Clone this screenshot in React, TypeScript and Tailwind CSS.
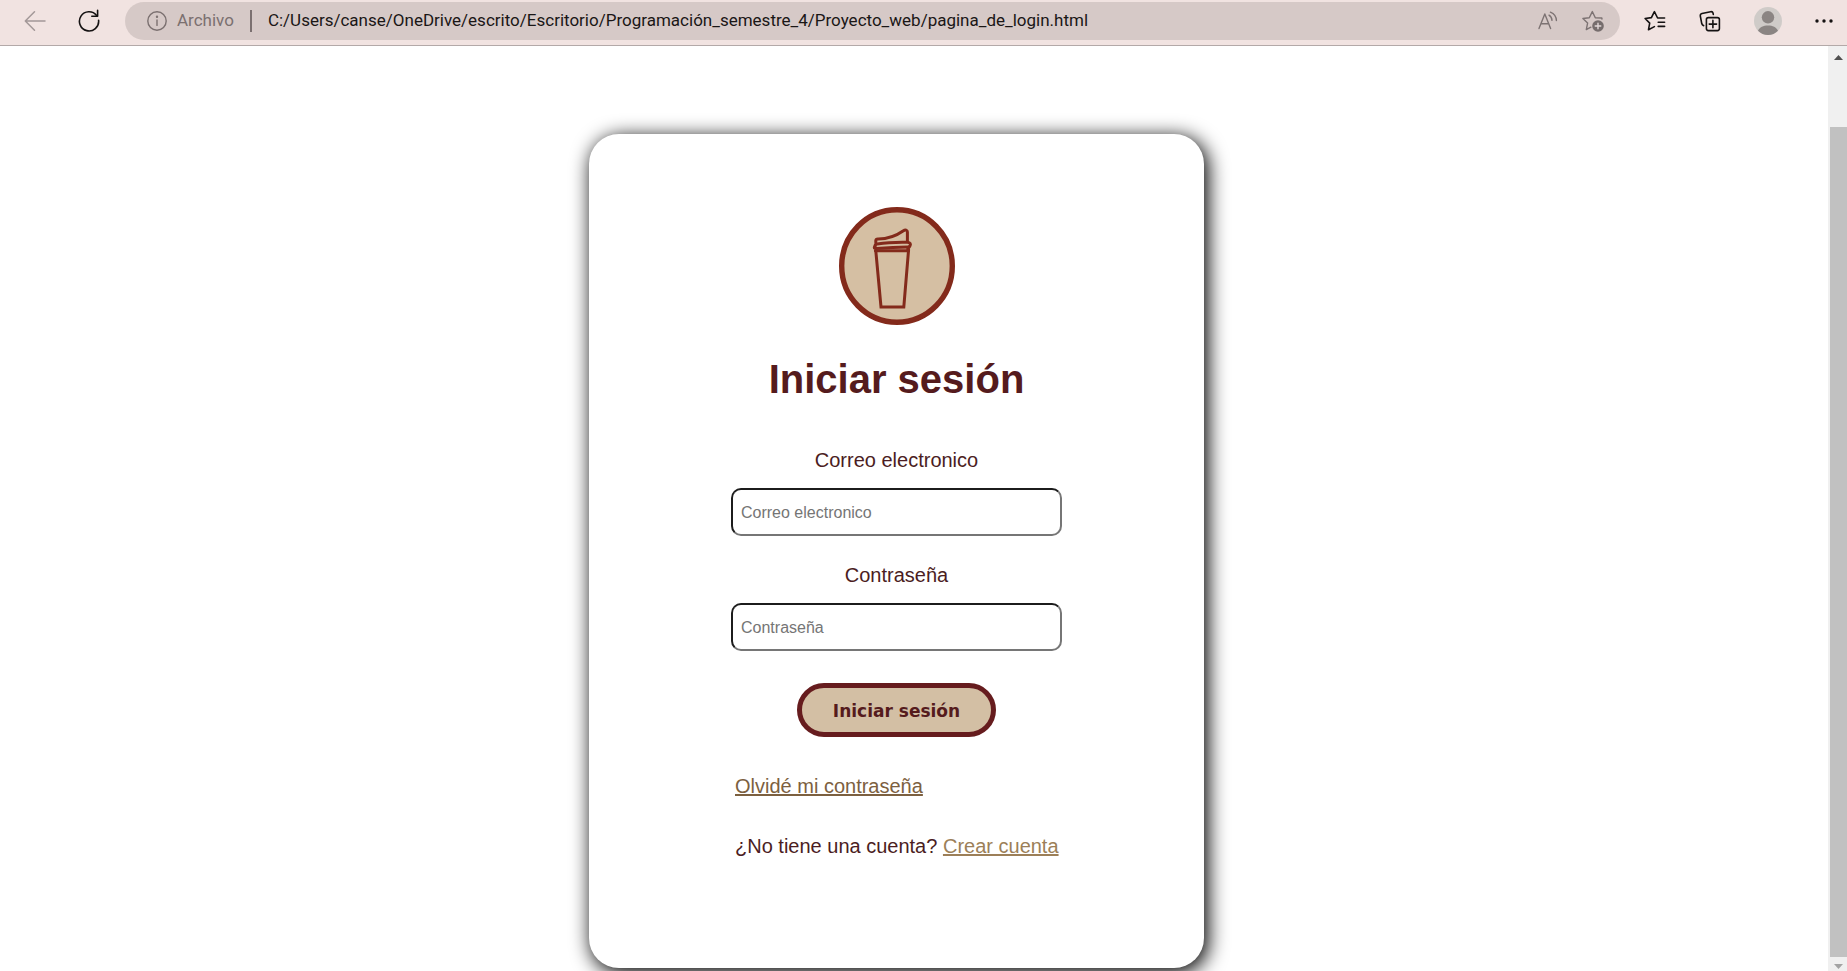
import React from "react";

function BackIcon() {
  return (
    <svg width="22" height="22" viewBox="0 0 22 22" fill="none" stroke="#a39898" strokeWidth="1.5" strokeLinecap="round" strokeLinejoin="round">
      <path d="M21 11H1.5M10.5 1.8L1.3 11l9.2 9.2" />
    </svg>
  );
}

function ReloadIcon() {
  return (
    <svg width="22" height="24" viewBox="0 0 22 24" fill="none" stroke="#151212" strokeWidth="1.6" strokeLinecap="round" strokeLinejoin="round">
      <path d="M20.6 11.4A9.6 9.6 0 1 1 18.6 6.4" />
      <path d="M19.6 1.4v5.8h-5.8" />
    </svg>
  );
}

function InfoIcon() {
  return (
    <svg width="20" height="22" viewBox="0 0 20 22" fill="none" stroke="#7b7070" strokeWidth="1.4" strokeLinecap="round">
      <circle cx="10" cy="11" r="9.2" />
      <path d="M10 10v5.4" />
      <circle cx="10" cy="6.8" r="0.5" fill="#7b7070" />
    </svg>
  );
}

function ReadAloudIcon() {
  return (
    <svg width="20" height="20" viewBox="0 0 20 20" fill="none" stroke="#7d7373" strokeWidth="1.4" strokeLinecap="round" strokeLinejoin="round">
      <path d="M1 17.6L6.8 3l5.8 14.6M3 12.8h7.8" />
      <path d="M11 4.2c2 1.2 2.9 3 3 5.2M12.4 1.2c3.8 1.6 5.9 4.6 6 8.4" />
    </svg>
  );
}

function StarAddIcon() {
  return (
    <svg width="22" height="22" viewBox="0 0 22 22" fill="none" stroke="#7d7373" strokeWidth="1.4" strokeLinecap="round" strokeLinejoin="round">
      <path d="M20 9l-.2-1-6.5-.2-3-6.2-3 6.2-6.4.7 4.7 4.6-1.3 6.5 4.6-2.4" />
      <circle cx="16" cy="16" r="5.8" fill="#766d6d" stroke="none" />
      <path d="M16 13.2v5.6M13.2 16h5.6" stroke="#e2d8d8" />
    </svg>
  );
}

function FavoritesIcon() {
  return (
    <svg width="22" height="22" viewBox="0 0 22 22" fill="none" stroke="#151212" strokeWidth="1.6" strokeLinecap="round" strokeLinejoin="round">
      <path d="M20.6 8H13.6L10.4 1.6 7.4 7.6l-6.3.9 4.6 4.6-1.2 6.6 5.9-3.1" />
      <path d="M14.2 12.2h6.4M14.2 16.4h6.4" />
    </svg>
  );
}

function CollectionsIcon() {
  return (
    <svg width="22" height="22" viewBox="0 0 22 22" fill="none" stroke="#151212" strokeWidth="1.6" strokeLinecap="round" strokeLinejoin="round">
      <rect x="7.4" y="7.6" width="13" height="13" rx="2" />
      <path d="M13.9 10.4v7.4M10.2 14.1h7.4" />
      <path d="M4.6 15.6c-1-.2-1.5-.8-1.8-1.8L1.3 6c-.2-1.3.5-2.2 1.7-2.5l8.6-1.8c1.3-.2 2.2.4 2.5 1.6l.2 1.1" />
    </svg>
  );
}

function AvatarIcon() {
  return (
    <svg width="28" height="28" viewBox="0 0 28 28">
      <circle cx="14" cy="14" r="14" fill="#cfcbc8" />
      <circle cx="14" cy="10.3" r="6.2" fill="#8b8583" />
      <path d="M4 23.8C5.5 20 9.4 18.4 14 18.4s8.5 1.6 10 5.4A14 14 0 0 1 14 28 14 14 0 0 1 4 23.8z" fill="#8b8583" />
    </svg>
  );
}

function CupLogo() {
  return (
    <svg className="mx-auto block" width="116" height="118" viewBox="0 0 116 118" fill="none" stroke="#832a1b" strokeLinejoin="round" strokeLinecap="round" role="img" aria-label="Logo">
      <ellipse cx="58" cy="59" rx="55.3" ry="56.2" fill="#d5bfa3" strokeWidth="5.4" />
      <g strokeWidth="3">
        <path d="M36.8 35.6v-2c.1-1.2.8-1.7 2-1.7C49 32 57 29 64 24c2.6-1.7 4.4-1 4.400 1v9.500" />
        <path d="M36 39.2c0-1.5.8-2.2 2.2-2.3C47 35.5 59 35 68.5 35.2c2.800.3 3.600 1.800 2.400 3.800l-2.200 3" />
        <path d="M36 39.2c-1.3 1.4-1 2.4 1.6 2.2 10.4-.7 21-1.2 31.600-1.400" />
        <path d="M36.4 43.8h33.2" />
        <path d="M36.8 43.8L42 100H64.8L69.6 42.5" strokeLinejoin="miter" />
      </g>
    </svg>
  );
}

function Field({ id, label, type }: { id: string; label: string; type: string }) {
  return (
    <div className="flex flex-col items-center gap-4">
      <label htmlFor={id} className="text-xl leading-6 text-[#4b1d22]">
        {label}
      </label>
      <input
        id={id}
        type={type}
        placeholder={label}
        className="h-12 w-full rounded-[10px] border-2 border-t-[#1c1c1c] border-r-[#767676] border-b-[#767676] border-l-[#1c1c1c] bg-white px-2 pt-px text-base text-black placeholder:text-[#757575]"
      />
    </div>
  );
}

function Toolbar() {
  return (
    <header className="flex h-[46px] shrink-0 items-center border-b border-[#b3a9a8] bg-[#f1e3e1] pr-[14px] pb-1">
      <div className="flex w-[125px] shrink-0 items-center gap-8 pl-6">
        <button type="button" aria-label="Atrás"><BackIcon /></button>
        <button type="button" aria-label="Actualizar"><ReloadIcon /></button>
      </div>
      <div className="flex h-[38px] min-w-0 flex-1 items-center rounded-full bg-[#d6c9c7] pr-4 pl-[22px] font-['Roboto','Open_Sans',sans-serif] text-[17px]">
        <InfoIcon />
        <span className="ml-[10px] text-[#7b7070]">Archivo</span>
        <span className="mx-4 h-[22px] w-[2px] shrink-0 bg-[#7b7070]" />
        <input
          aria-label="Dirección"
          className="min-w-0 flex-1 bg-transparent text-[#1a1616] outline-none"
          defaultValue="C:/Users/canse/OneDrive/escrito/Escritorio/Programación_semestre_4/Proyecto_web/pagina_de_login.html"
        />
        <div className="flex items-center gap-6">
          <button type="button" aria-label="Leer en voz alta"><ReadAloudIcon /></button>
          <button type="button" aria-label="Agregar a favoritos"><StarAddIcon /></button>
        </div>
      </div>
      <div className="ml-6 flex shrink-0 items-center gap-[33px]">
        <button type="button" aria-label="Favoritos"><FavoritesIcon /></button>
        <button type="button" aria-label="Colecciones"><CollectionsIcon /></button>
        <button type="button" aria-label="Perfil"><AvatarIcon /></button>
        <button type="button" aria-label="Más">
          <svg width="18" height="6" viewBox="0 0 18 6" fill="#151212">
            <circle cx="2" cy="3" r="1.7" /><circle cx="9" cy="3" r="1.7" /><circle cx="16" cy="3" r="1.7" />
          </svg>
        </button>
      </div>
    </header>
  );
}

function ScrollBar() {
  return (
    <div className="flex w-[19px] shrink-0 flex-col items-center bg-[#f0f0f0] pl-[2px]" aria-hidden="true">
      <div className="flex h-[81px] justify-center pt-[9px]">
        <svg width="9" height="5" viewBox="0 0 9 5"><path d="M0 5L4.5 0 9 5z" fill="#505050" /></svg>
      </div>
      <div className="w-full flex-1 bg-[#c1c1c1]" />
      <div className="flex h-[14px] items-center pt-1">
        <svg width="9" height="5" viewBox="0 0 9 5"><path d="M0 0L4.5 5 9 0z" fill="#a3a3a3" /></svg>
      </div>
    </div>
  );
}

export default function App() {
  return (
    <div className="flex h-screen flex-col overflow-hidden bg-white font-['Liberation_Sans',Arial,sans-serif]">
      <Toolbar />
      <div className="flex min-h-0 flex-1">
        <main className="min-w-0 flex-1 overflow-hidden pt-[88px] pr-[35px]">
          <section className="mx-auto w-full max-w-[615px] rounded-[30px] bg-white px-4 pt-[73px] pb-[110px] shadow-[3px_4px_20px_1px_#000]">
            <form className="mx-auto max-w-[331px]" onSubmit={(e) => e.preventDefault()}>
              <CupLogo />
              <h1 className="mt-[31px] text-center text-[40px] leading-[46px] font-bold text-[#551b1d]">Iniciar sesión</h1>
              <div className="mt-[46px] flex flex-col gap-[27px]">
                <Field id="correo" label="Correo electronico" type="email" />
                <Field id="clave" label="Contraseña" type="password" />
              </div>
              <button
                type="submit"
                className="mx-auto mt-8 block h-[54px] w-[199px] rounded-full border-[5px] border-[#661c1e] bg-[#d3bfa4] pt-1 font-['DejaVu_Sans',sans-serif] text-[17px] font-bold text-[#551b1d]"
              >
                Iniciar sesión
              </button>
              <div className="mt-[37px] flex flex-col gap-9 pl-1 text-xl leading-6 whitespace-nowrap text-[#4b1d22]">
                <p>
                  <a href="#recuperar" className="text-[#7c6040] underline">Olvidé mi contraseña</a>
                </p>
                <p>
                  ¿No tiene una cuenta?{" "}
                  <a href="#crear" className="text-[#9c7f58] underline">Crear cuenta</a>
                </p>
              </div>
            </form>
          </section>
        </main>
        <ScrollBar />
      </div>
    </div>
  );
}
